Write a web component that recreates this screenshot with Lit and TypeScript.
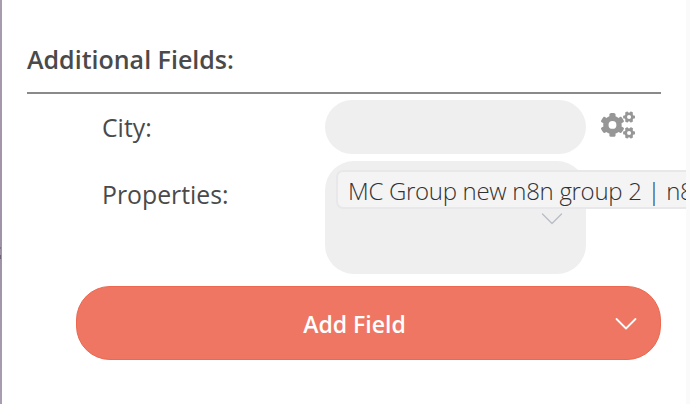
import { LitElement, html, css, svg } from "lit";
import { customElement, property } from "lit/decorators.js";

const SMALL_GEAR =
  "M512.1 191l-8.2 14.3c-3 5.3-9.4 7.5-15.1 5.4-11.8-4.4-22.6-10.7-32.1-18.6-4.6-3.8-5.8-10.5-2.8-15.7l8.2-14.3c-6.9-8-12.3-17.3-15.9-27.4h-16.5c-6 0-11.2-4.3-12.2-10.3-2-12-2.1-24.6 0-37.1 1-6 6.2-10.4 12.2-10.4h16.5c3.6-10.1 9-19.4 15.9-27.4l-8.2-14.3c-3-5.2-1.9-11.9 2.8-15.7 9.5-7.9 20.4-14.2 32.1-18.6 5.7-2.1 12.1.1 15.1 5.4l8.2 14.3c10.5-1.9 21.2-1.9 31.7 0L552 6.3c3-5.3 9.4-7.5 15.1-5.4 11.8 4.4 22.6 10.7 32.1 18.6 4.6 3.8 5.8 10.5 2.8 15.7l-8.2 14.3c6.9 8 12.3 17.3 15.9 27.4h16.5c6 0 11.2 4.3 12.2 10.3 2 12 2.1 24.6 0 37.1-1 6-6.2 10.4-12.2 10.4h-16.5c-3.6 10.1-9 19.4-15.9 27.4l8.2 14.3c3 5.2 1.9 11.9-2.8 15.7-9.5 7.9-20.4 14.2-32.1 18.6-5.7 2.1-12.1-.1-15.1-5.4l-8.2-14.3c-10.4 1.9-21.2 1.9-31.7 0zM566 106a38 38 0 1 0-76 0a38 38 0 1 0 76 0z";
const LARGE_GEAR =
  "M386.3 286.1l33.7 16.8c10.1 5.8 14.5 18.1 10.5 29.1-8.9 24.2-26.4 46.4-42.6 65.8-7.4 8.9-20.2 11.1-30.3 5.3l-29.1-16.8c-16 13.7-34.6 24.6-54.9 31.7v33.6c0 11.6-8.3 21.6-19.7 23.6-24.6 4.2-50.4 4.4-75.9 0-11.5-2-20-11.9-20-23.6V418c-20.3-7.2-38.9-18-54.9-31.7L74 403c-10 5.8-22.9 3.6-30.3-5.3-16.2-19.4-33.3-41.6-42.2-65.7-4-10.9.4-23.2 10.5-29.1l33.3-16.8c-3.9-20.9-3.9-42.4 0-63.4L12 205.8c-10.1-5.8-14.6-18.1-10.5-29 8.9-24.2 26-46.4 42.2-65.8 7.4-8.9 20.2-11.1 30.3-5.3l29.1 16.8c16-13.7 34.6-24.6 54.9-31.7V57.1c0-11.5 8.2-21.5 19.6-23.5 24.6-4.2 50.5-4.4 76-.1 11.5 2 20 11.9 20 23.6v33.6c20.3 7.2 38.9 18 54.9 31.7l29.1-16.8c10-5.8 22.9-3.6 30.3 5.3 16.2 19.4 33.2 41.6 42.1 65.8 4 10.9.1 23.2-10 29.1l-33.7 16.8c3.9 21 3.9 42.5 0 63.5zM290 254a74 74 0 1 0-148 0a74 74 0 1 0 148 0z";

@customElement("chevron-down")
class ChevronDown extends LitElement {
  static styles = css`
    :host { display: block; width: 22px; height: 14px; }
    .icon { display: block; fill: none; stroke: currentColor; stroke-linecap: round; stroke-linejoin: round; }
  `;
  @property({ type: Number }) weight = 1.3;
  render() {
    return html`<svg class="icon" width="22" height="14" viewBox="0 0 22 14">
      ${svg`<path d="M1.5 2 L11 11.5 L20.5 2" stroke-width=${this.weight} />`}
    </svg>`;
  }
}

@customElement("app-root")
class AppRoot extends LitElement {
  static styles = css`
    :host {
      display: flex;
      box-sizing: border-box;
      width: 690px;
      height: 404px;
      overflow: hidden;
      background: #fff;
      color: #4a4a4a;
      font-family: "Open Sans", sans-serif;
    }
    .edge {
      flex: none;
      width: 2px;
      background:
        linear-gradient(#82758c, #82758c) 0 247px / 1px 2px no-repeat,
        linear-gradient(#6f6279, #6f6279) 0 255px / 1px 4px no-repeat,
        linear-gradient(#a89caf, #a394aa 42%, #9f93a8 62%, #a99db1);
    }
    .gutter { flex: none; width: 4px; background: #fafafa; }
    .panel { flex: none; box-sizing: border-box; width: 684px; padding: 42px 25px 0 25px; overflow: hidden; }
    .title {
      height: 50px;
      border-bottom: 2px solid #8a8a8a;
      font-size: 25px;
      line-height: 35px;
      font-weight: 600;
      white-space: nowrap;
    }
    .row { display: flex; margin-left: 75px; }
    .city { margin-top: 6px; height: 54px; }
    .properties { margin-top: 7px; height: 113px; }
    .label { flex: none; width: 223px; font-size: 24.8px; line-height: 34px; }
    .city .label { padding-top: 10px; }
    .properties .label { padding-top: 16px; }
    .input { flex: none; width: 261px; background: #efefef; border-radius: 27px; }
    .select { box-sizing: border-box; padding: 9px 0 0 11px; border-radius: 29px; }
    .tag {
      box-sizing: border-box;
      width: 400px;
      height: 39px;
      padding-left: 10px;
      border: 2px solid #e8e8ea;
      border-radius: 7px;
      background: #f4f4f4;
      color: #303133;
      font-size: 24px;
      line-height: 38px;
      letter-spacing: -0.3px;
      font-weight: 300;
      white-space: nowrap;
    }
    .arrow { margin: 3px 0 0 205px; color: #b9bdc6; }
    .gears { display: block; margin: 11px 0 0 15px; fill: #969696; }
    .add {
      display: grid;
      grid-template-columns: 22px 1fr 22px;
      align-items: center;
      box-sizing: border-box;
      height: 74px;
      margin: 12px 0 0 49px;
      padding: 2px 23px 0 16px;
      border: 1px solid #ec6850;
      border-radius: 34px;
      background: #ee7662;
      color: #fff;
    }
    .caption { grid-column: 2; padding-right: 21px; text-align: center; font-size: 23px; font-weight: 600; line-height: 32px; }
  `;

  render() {
    return html`
      <div class="edge"></div>
      <main class="panel">
        <div class="title"><span>Additional Fields:</span></div>
        <div class="row city">
          <div class="label"><span>City:</span></div>
          <div class="input"></div>
          <svg class="gears" width="34" height="28" viewBox="0 0 640 512">
            <path d=${LARGE_GEAR} />
            <path d=${SMALL_GEAR} />
            <path d=${SMALL_GEAR} transform="translate(0 298.9)" />
          </svg>
        </div>
        <div class="row properties">
          <div class="label"><span>Properties:</span></div>
          <div class="input select">
            <div class="tag"><span>MC Group new n8n group 2 | n8</span></div>
            <chevron-down class="arrow"></chevron-down>
          </div>
        </div>
        <div class="add">
          <span class="caption">Add Field</span>
          <chevron-down .weight=${1.8}></chevron-down>
        </div>
      </main>
      <div class="gutter"></div>
    `;
  }
}
